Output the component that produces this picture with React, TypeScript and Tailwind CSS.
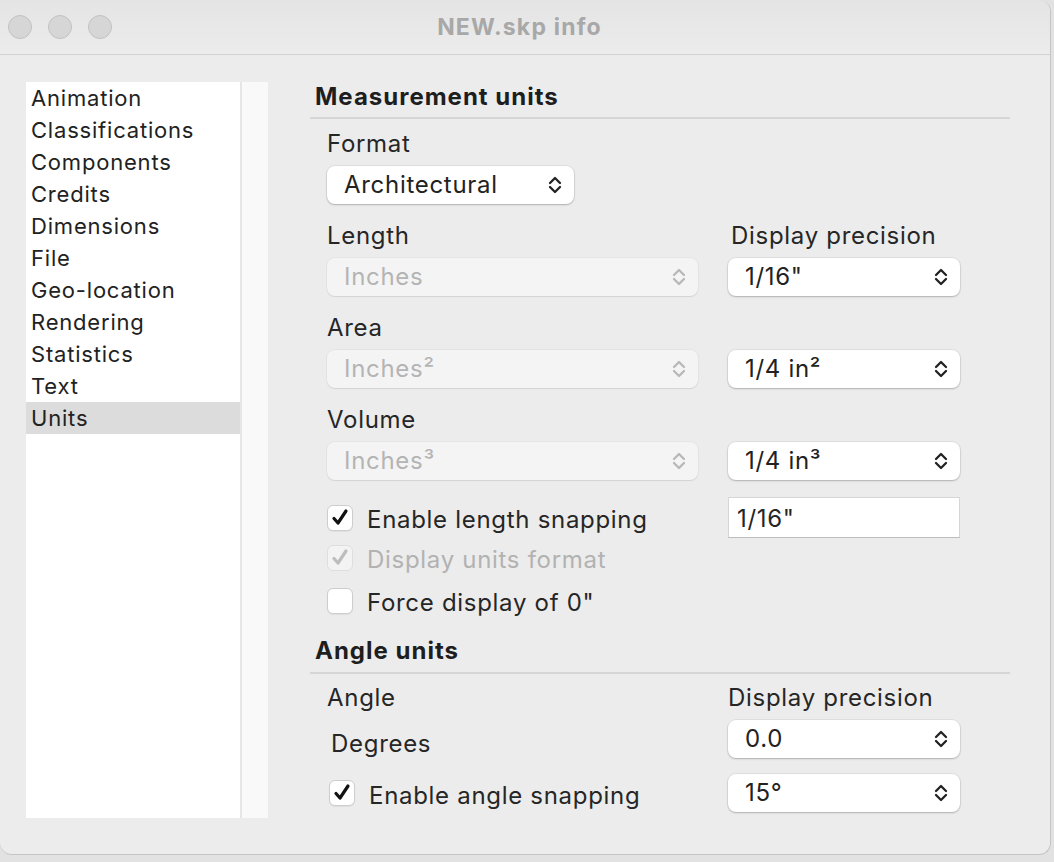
import React from "react";

const font = { fontFamily: "Inter, 'Noto Sans', 'Liberation Sans', sans-serif" };

const sections = [
  "Animation",
  "Classifications",
  "Components",
  "Credits",
  "Dimensions",
  "File",
  "Geo-location",
  "Rendering",
  "Statistics",
  "Text",
  "Units",
];

const txt = "text-[24px] leading-[28px] tracking-[0.7px]";
const head = "h-[28px] pl-[5px] text-[24px] leading-[28px] tracking-[1px] font-bold text-[#1e1e1e]";

function UpDown({ disabled }: { disabled?: boolean }) {
  return (
    <svg width="16" height="20" viewBox="0 0 16 20" fill="none" className="shrink-0">
      <path
        d="M3 8 L8 3 L13 8 M3 12 L8 17 L13 12"
        stroke={disabled ? "#b8b8b8" : "#222"}
        strokeWidth="2.3"
        strokeLinecap="round"
        strokeLinejoin="round"
      />
    </svg>
  );
}

function Select({ value, width, disabled }: { value: string; width: string; disabled?: boolean }) {
  return (
    <div
      className={
        disabled
          ? `${width} h-[38px] flex items-center justify-between pl-[17px] pr-[11px] rounded-[8px] bg-[#f4f4f4] shadow-[0_0_0_1px_rgba(0,0,0,0.03),0_1px_1px_rgba(0,0,0,0.08)] text-[#b4b4b4]`
          : `${width} h-[38px] flex items-center justify-between pl-[17px] pr-[11px] rounded-[8px] bg-white shadow-[0_0_0_1px_rgba(0,0,0,0.05),0_1px_2px_rgba(0,0,0,0.22)] text-[#222]`
      }
    >
      <span className="text-[24px] leading-none tracking-[0.7px]">{value}</span>
      <UpDown disabled={disabled} />
    </div>
  );
}

function Checkbox({ checked, disabled }: { checked?: boolean; disabled?: boolean }) {
  return (
    <div
      className={
        disabled
          ? "w-[26px] h-[26px] rounded-[6px] bg-[#f3f3f3] border border-[#dedede] flex items-center justify-center shrink-0"
          : "w-[26px] h-[26px] rounded-[6px] bg-white border border-[#cdcdcd] shadow-[0_1px_1px_rgba(0,0,0,0.06)] flex items-center justify-center shrink-0"
      }
    >
      {checked && (
        <svg width="22" height="22" viewBox="0 0 22 22" fill="none">
          <path
            d="M5 11.5 L9 16 L17 4"
            stroke={disabled ? "#bdbdbd" : "#111"}
            strokeWidth="3.2"
            strokeLinecap="round"
            strokeLinejoin="round"
          />
        </svg>
      )}
    </div>
  );
}

export default function App() {
  return (
    <div className="w-[1054px] h-[862px] bg-[#e2e2e2] overflow-hidden" style={font}>
      <div className="w-[1051px] h-[855px] bg-[#ececec] rounded-tr-[12px] rounded-br-[12px] rounded-bl-[12px] border-r border-b border-[#c4c4c4] flex flex-col">
        {/* title bar */}
        <div className="h-[55px] shrink-0 border-b border-[#d2d2d2] bg-gradient-to-b from-[#e4e4e4] to-[#ececec] rounded-tr-[12px] flex items-center">
          <div className="flex gap-[16px] pl-[8px]">
            <span className="w-[24px] h-[24px] rounded-full bg-[#d6d6d6] border border-[#c2c2c2]" />
            <span className="w-[24px] h-[24px] rounded-full bg-[#d6d6d6] border border-[#c2c2c2]" />
            <span className="w-[24px] h-[24px] rounded-full bg-[#d6d6d6] border border-[#c2c2c2]" />
          </div>
          <div className="flex-1 flex justify-center pr-[123px]">
            <span className="text-[23px] font-bold tracking-[1.2px] text-[#a8a8a8]">NEW.skp info</span>
          </div>
        </div>

        <div className="flex flex-1">
          {/* sidebar */}
          <div className="ml-[26px] mt-[27px] h-[736px] flex">
            <div className="w-[214px] bg-white">
              {sections.map((s) => (
                <div
                  key={s}
                  className={
                    s === "Units"
                      ? "h-[32px] flex items-center pl-[5px] pt-[1px] bg-[#dcdcdc] text-[22px] tracking-[0.8px] text-[#222]"
                      : "h-[32px] flex items-center pl-[5px] pt-[1px] text-[22px] tracking-[0.8px] text-[#222]"
                  }
                >
                  {s}
                </div>
              ))}
            </div>
            <div className="w-[2px] bg-[#e6e6e6]" />
            <div className="w-[26px] bg-[#f9f9f9]" />
          </div>

          {/* main */}
          <div className="ml-[42px] w-[700px] pt-[28px] flex flex-col text-[#262626]">
            <div className={head}>Measurement units</div>
            <div className="mt-[6px] h-[2px] bg-[#d6d6d6]" />

            <div className="pl-[17px] flex flex-col">
              <div className={`mt-[10px] h-[28px] pt-[1px] ${txt}`}>Format</div>
              <div className="mt-[9px]">
                <Select value="Architectural" width="w-[247px]" />
              </div>

              <div className="mt-[17px] grid grid-cols-[371px_232px] gap-x-[30px]">
                <div className={`h-[28px] pt-[1px] ${txt}`}>Length</div>
                <div className={`h-[28px] pt-[1px] pl-[3px] ${txt}`}>Display precision</div>
                <div className="mt-[9px]">
                  <Select value="Inches" width="w-[371px]" disabled />
                </div>
                <div className="mt-[9px]">
                  <Select value={'1/16"'} width="w-[232px]" />
                </div>

                <div className={`mt-[17px] h-[28px] pt-[1px] col-span-2 ${txt}`}>Area</div>
                <div className="mt-[9px]">
                  <Select value="Inches²" width="w-[371px]" disabled />
                </div>
                <div className="mt-[9px]">
                  <Select value="1/4 in²" width="w-[232px]" />
                </div>

                <div className={`mt-[17px] h-[28px] pt-[1px] col-span-2 ${txt}`}>Volume</div>
                <div className="mt-[9px]">
                  <Select value="Inches³" width="w-[371px]" disabled />
                </div>
                <div className="mt-[9px]">
                  <Select value="1/4 in³" width="w-[232px]" />
                </div>

                <div className="mt-[17px] h-[41px] flex items-center gap-[14px]">
                  <Checkbox checked />
                  <span className={`pt-[4px] ${txt}`}>Enable length snapping</span>
                </div>
                <div className="mt-[17px] h-[41px] bg-white border border-[#d6d6d6] border-b-[#bdbdbd] flex items-center pl-[8px] pt-[2px] text-[24px] tracking-[0.7px]">
                  1/16"
                </div>
              </div>

              <div className="mt-[7px] h-[26px] flex items-center gap-[14px]">
                <Checkbox checked disabled />
                <span className={`pt-[4px] text-[#b2b2b2] ${txt}`}>Display units format</span>
              </div>
              <div className="mt-[17px] h-[26px] flex items-center gap-[14px]">
                <Checkbox />
                <span className={`pt-[4px] ${txt}`}>Force display of 0"</span>
              </div>
            </div>

            <div className={`mt-[23px] ${head}`}>Angle units</div>
            <div className="mt-[7px] h-[2px] bg-[#d6d6d6]" />

            <div className="pl-[17px] grid grid-cols-[371px_232px] gap-x-[30px]">
              <div className={`mt-[9px] h-[28px] pt-[1px] ${txt}`}>Angle</div>
              <div className={`mt-[9px] h-[28px] pt-[1px] ${txt}`}>Display precision</div>

              <div className={`mt-[9px] h-[38px] flex items-center pl-[4px] pt-[9px] ${txt}`}>Degrees</div>
              <div className="mt-[9px]">
                <Select value="0.0" width="w-[232px]" />
              </div>

              <div className="mt-[16px] h-[38px] flex items-center gap-[14px] pl-[2px]">
                <Checkbox checked />
                <span className={`pt-[6px] ${txt}`}>Enable angle snapping</span>
              </div>
              <div className="mt-[16px]">
                <Select value="15°" width="w-[232px]" />
              </div>
            </div>
          </div>
        </div>
      </div>
    </div>
  );
}
